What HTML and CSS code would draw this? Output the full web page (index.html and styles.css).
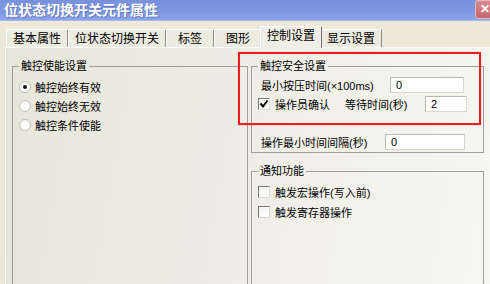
FILE: index.html
```html
<!DOCTYPE html>
<html lang="zh-CN">
<head>
    <meta charset="UTF-8">
    <title>位状态切换开关元件属性</title>
    <link rel="stylesheet" href="styles.css">
</head>
<body>
    <div class="dialog">
        <!-- 标题栏 -->
        <div class="titlebar">
            <span class="title">位状态切换开关元件属性</span>
            <span class="close">✕</span>
        </div>

        <!-- 选项卡 -->
        <div class="tabs">
            <div class="tab">基本属性</div>
            <div class="tab">位状态切换开关</div>
            <div class="tab">标签</div>
            <div class="tab">图形</div>
            <div class="tab active">控制设置</div>
            <div class="tab">显示设置</div>
        </div>

        <!-- 控制设置页 -->
        <div class="panel">
            <fieldset class="group group-enable">
                <legend>触控使能设置</legend>
                <label class="option"><span class="radio checked"></span>触控始终有效</label>
                <label class="option"><span class="radio"></span>触控始终无效</label>
                <label class="option"><span class="radio"></span>触控条件使能</label>
            </fieldset>

            <div class="right-col">
                <fieldset class="group group-safe">
                    <legend>触控安全设置</legend>
                    <div class="row row-press">
                        <span class="label label-press">最小按压时间(×100ms)</span>
                        <span class="input input-press">0</span>
                    </div>
                    <div class="row row-confirm">
                        <span class="check checked">
                            <svg width="10" height="10" viewBox="0 0 10 10"><polyline points="1.5,4.5 4,7.5 8.5,1.5" fill="none" stroke="#000" stroke-width="2"/></svg>
                        </span>
                        <span class="label label-confirm">操作员确认</span>
                        <span class="label label-wait">等待时间(秒)</span>
                        <span class="input input-wait">2</span>
                    </div>
                    <div class="row row-interval">
                        <span class="label label-interval">操作最小时间间隔(秒)</span>
                        <span class="input input-interval">0</span>
                    </div>
                </fieldset>

                <fieldset class="group group-notify">
                    <legend>通知功能</legend>
                    <label class="option"><span class="check"></span>触发宏操作(写入前)</label>
                    <label class="option"><span class="check"></span>触发寄存器操作</label>
                </fieldset>
            </div>

            <!-- 红色标注框 -->
            <div class="highlight"></div>
        </div>
    </div>
</body>
</html>
```

FILE: styles.css
```css
* {
    margin: 0;
    padding: 0;
    box-sizing: border-box;
}

body {
    width: 490px;
    height: 284px;
    overflow: hidden;
    background: #ece9d8;
    font-family: "Liberation Sans", "Noto Sans CJK SC", sans-serif;
    font-size: 11px;
    color: #000;
}

.dialog {
    width: 490px;
    height: 284px;
    overflow: hidden;
}

/* 标题栏 */
.titlebar {
    height: 21px;
    display: flex;
    align-items: center;
    justify-content: space-between;
    padding-left: 4px;
    background: linear-gradient(to bottom, #7891dc 0%, #7e98e0 60%, #8ba3e7 100%);
    border-bottom: 1px solid #a6b8ec;
    overflow: hidden;
}

.title {
    color: #fff;
    font-size: 14px;
    font-weight: 700;
    line-height: 16px;
    text-shadow: 1px 1px 0 rgba(40, 50, 120, 0.35);
}

.close {
    width: 20px;
    height: 19px;
    margin-right: -5px;
    margin-top: -2px;
    display: flex;
    align-items: center;
    justify-content: center;
    background: linear-gradient(to bottom, #d88a8e, #c26a70);
    border: 1px solid #e8b9bc;
    border-radius: 3px;
    color: #fff;
    font-size: 12px;
    font-weight: 700;
}

/* 选项卡 */
.tabs {
    height: 26px;
    display: flex;
    align-items: flex-end;
    padding-left: 6px;
}

.tab {
    height: 18px;
    min-width: 48px;
    padding: 0 6px;
    display: flex;
    align-items: center;
    justify-content: center;
    font-size: 12px;
    line-height: 14px;
    border-left: 1px solid #fff;
    border-top: 1px solid #fbfbf7;
    border-right: 1px solid #8d8d86;
    background: #ecebe0;
}

.tab.active {
    height: 22px;
    margin: 0 -2px -1px;
    padding-bottom: 3px;
    position: relative;
    z-index: 2;
    background: #efeee6;
    border-right-color: #717171;
}

/* 选项卡页面 */
.panel {
    position: relative;
    margin-left: 5px;
    height: 237px;
    overflow: hidden;
    padding: 11px 0 0 6px;
    display: grid;
    grid-template-columns: 236px 233px;
    column-gap: 3px;
    align-items: start;
    border-left: 1px solid #fff;
    border-top: 1px solid #fff;
    background: linear-gradient(100deg, #e7e6db 0%, #eeede5 45%, #f7f7f3 100%);
}

.group {
    border: 1px solid #a19f94;
    padding: 4px 6px 1px 6px;
}

.group legend {
    padding: 0 2px;
    font-size: 11px;
    line-height: 14px;
}

.group-enable {
    height: 240px;
}

.group-safe {
    height: 94px;
}

.group-notify {
    margin-top: 11px;
    height: 140px;
}

.option {
    height: 19px;
    display: flex;
    align-items: center;
    gap: 4px;
}

.group-notify .option {
    gap: 5px;
    height: 20px;
}

/* 单选框 */
.radio {
    width: 12px;
    height: 12px;
    border-radius: 50%;
    border: 1px solid #c4c3bb;
    background: radial-gradient(circle at 60% 60%, #fff 40%, #e9e8e0 100%);
    display: flex;
    align-items: center;
    justify-content: center;
}

.radio.checked::after {
    content: '';
    width: 4px;
    height: 4px;
    border-radius: 50%;
    background: #111;
}

/* 复选框 */
.check {
    width: 12px;
    height: 12px;
    flex: none;
    border-top: 1px solid #7b7b74;
    border-left: 1px solid #7b7b74;
    border-right: 1px solid #dcdcd4;
    border-bottom: 1px solid #dcdcd4;
    background: linear-gradient(135deg, #f2f2ec, #fff);
    display: flex;
    align-items: center;
    justify-content: center;
}

/* 安全设置行 */
.row {
    height: 16px;
    display: flex;
    align-items: center;
}

.row-confirm {
    margin-top: 3px;
}

.row-interval {
    margin-top: 22px;
}

.label {
    white-space: nowrap;
}

.label-press {
    width: 132px;
    padding-left: 3px;
}

.label-confirm {
    width: 75px;
    padding-left: 5px;
}

.label-wait {
    width: 80px;
}

.label-interval {
    width: 127px;
    padding-left: 3px;
}

.input {
    height: 16px;
    line-height: 14px;
    padding-left: 5px;
    background: #fff;
    border: 1px solid #d9d8cf;
    border-top-color: #bcbbb2;
    border-left-color: #bcbbb2;
    font-family: "Liberation Sans", sans-serif;
    font-size: 11px;
}

.input-press {
    width: 74px;
}

.input-wait {
    width: 42px;
}

.input-interval {
    width: 80px;
}

/* 红色标注框 */
.highlight {
    position: absolute;
    left: 232px;
    top: 4px;
    width: 243px;
    height: 73px;
    border: 2px solid #ea1d22;
    box-shadow: 0 0 1px rgba(255, 60, 60, 0.6);
    pointer-events: none;
}
```
